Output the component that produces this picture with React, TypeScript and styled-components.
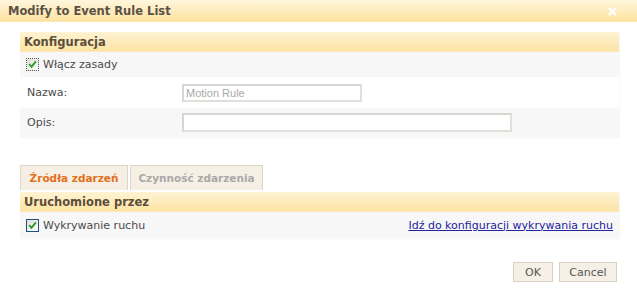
import React from "react";
import styled, { createGlobalStyle } from "styled-components";

const Global = createGlobalStyle`
  html, body { margin: 0; padding: 0; background: #ffffff; }
  body { width: 637px; height: 298px; overflow: hidden; font-family: "DejaVu Sans", Verdana, sans-serif; }
`;

const Dialog = styled.div`
  width: 637px;
  height: 298px;
  display: flex;
  flex-direction: column;
  background: #fff;
`;

const TitleBar = styled.div`
  height: 22px;
  flex: none;
  display: flex;
  align-items: center;
  justify-content: space-between;
  padding: 0 20px 0 8px;
  background: linear-gradient(#fff6dc, #fde3a0);
  border-bottom: 1px solid #fbe7b6;
  box-sizing: border-box;
`;

const Title = styled.span`
  font-family: "DejaVu Sans", Verdana, sans-serif;
  font-weight: bold;
  font-size: 11.5px;
  color: #5a5248;
`;

const Close = styled.span`
  width: 9px;
  height: 9px;
  display: flex;
  margin-top: 2px;
`;

const Body = styled.div`
  padding: 10px 18px 0 20px;
  display: flex;
  flex-direction: column;
`;

const Panel = styled.div`
  display: flex;
  flex-direction: column;
  box-shadow: 1px 1px 2px rgba(0, 0, 0, 0.04);
`;

const Header = styled.div`
  height: 20px;
  display: flex;
  align-items: center;
  padding-left: 4px;
  background: linear-gradient(#fff3d4, #fde4a4);
  border-bottom: 1px solid #fbe9c0;
  box-sizing: border-box;
  font-weight: bold;
  font-size: 11.5px;
  color: #5b4e3a;
`;

const Row = styled.div<{ $h: number; $gray?: boolean }>`
  height: ${(p) => p.$h}px;
  display: flex;
  align-items: center;
  background: ${(p) => (p.$gray ? "#f7f7f7" : "#ffffff")};
  font-size: 11px;
  color: #4a4a4a;
`;

const CheckLabel = styled.label`
  display: flex;
  align-items: center;
  gap: 4px;
  padding-left: 6px;
`;

const Box = styled.span<{ $focus?: boolean }>`
  width: 11px;
  height: 11px;
  display: flex;
  align-items: center;
  justify-content: center;
  background: linear-gradient(135deg, #dcdcd4, #ffffff);
  border: 1px ${(p) => (p.$focus ? "dotted #5a5a5a" : "solid #1d5180")};
`;

const Label = styled.span`
  width: 155px;
  padding-left: 7px;
`;

const Input = styled.div<{ $w: number; $h: number }>`
  width: ${(p) => p.$w}px;
  height: ${(p) => p.$h}px;
  box-sizing: border-box;
  border: 2px solid #d6d6d0;
  border-right-color: #e0e0da;
  border-bottom-color: #e0e0da;
  background: #fff;
  display: flex;
  align-items: center;
  padding-left: 2px;
  font-family: "Liberation Sans", Arial, sans-serif;
  font-size: 11px;
  color: #a8a8a8;
`;

const Tabs = styled.div`
  display: flex;
  gap: 2px;
  margin-top: 28px;
`;

const Tab = styled.div<{ $active?: boolean; $w: number }>`
  width: ${(p) => p.$w}px;
  height: 25px;
  box-sizing: border-box;
  display: flex;
  align-items: center;
  justify-content: center;
  background: #f6efe4;
  border: 1px solid #ddd5c8;
  border-bottom: none;
  font-weight: bold;
  font-size: 10.5px;
  color: ${(p) => (p.$active ? "#e2701c" : "#a9a9a9")};
`;

const Panel2 = styled(Panel)`
  margin-top: 2px;
`;

const Link = styled.a`
  margin-left: auto;
  margin-right: 6px;
  color: #23239e;
  text-decoration: underline;
  cursor: pointer;
`;

const Buttons = styled.div`
  display: flex;
  justify-content: flex-end;
  gap: 6px;
  margin-top: 24px;
  margin-right: 2px;
`;

const Button = styled.button<{ $w: number }>`
  width: ${(p) => p.$w}px;
  height: 20px;
  padding: 0;
  background: #f5efe5;
  border: 1px solid #d8d0c2;
  font-family: "DejaVu Sans", Verdana, sans-serif;
  font-size: 11px;
  color: #555;
`;

const Check = () => (
  <svg width="9" height="9" viewBox="0 0 9 9">
    <path d="M1.2 4.2 L3.5 6.8 L7.9 1.4" fill="none" stroke="#2e9a2e" strokeWidth="2" />
  </svg>
);

export default function App() {
  return (
    <>
      <Global />
      <Dialog>
        <TitleBar>
          <Title>Modify to Event Rule List</Title>
          <Close>
            <svg width="9" height="9" viewBox="0 0 9 9">
              <path d="M1 1 L8 8 M8 1 L1 8" stroke="#ffffff" strokeWidth="2.2" />
            </svg>
          </Close>
        </TitleBar>
        <Body>
          <Panel>
            <Header>Konfiguracja</Header>
            <Row $h={25} $gray>
              <CheckLabel>
                <Box $focus>
                  <Check />
                </Box>
                Włącz zasady
              </CheckLabel>
            </Row>
            <Row $h={31}>
              <Label>Nazwa:</Label>
              <Input $w={180} $h={18}>Motion Rule</Input>
            </Row>
            <Row $h={29} $gray>
              <Label>Opis:</Label>
              <Input $w={330} $h={19} />
            </Row>
          </Panel>
          <Tabs>
            <Tab $active $w={108}>Źródła zdarzeń</Tab>
            <Tab $w={133}>Czynność zdarzenia</Tab>
          </Tabs>
          <Panel2>
            <Header>Uruchomione przez</Header>
            <Row $h={26} $gray>
              <CheckLabel>
                <Box>
                  <Check />
                </Box>
                Wykrywanie ruchu
              </CheckLabel>
              <Link>Idź do konfiguracji wykrywania ruchu</Link>
            </Row>
          </Panel2>
          <Buttons>
            <Button $w={40}>OK</Button>
            <Button $w={58}>Cancel</Button>
          </Buttons>
        </Body>
      </Dialog>
    </>
  );
}
